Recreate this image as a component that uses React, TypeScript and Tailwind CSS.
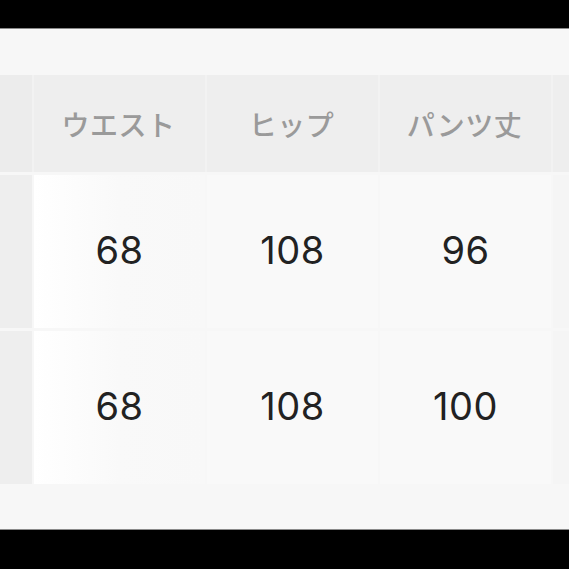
const headers = ["ウエスト", "ヒップ", "パンツ丈"];
const rows = [
  ["68", "108", "96"],
  ["68", "108", "100"],
];

const font = { fontFamily: '"Noto Sans CJK JP", "Noto Sans", sans-serif' };
const numFont = { fontFamily: 'Inter, "Noto Sans CJK JP", sans-serif' };

export default function App() {
  return (
    <div className="w-[569px] h-[569px] flex flex-col bg-[#f7f7f7] overflow-hidden" style={font}>
      {/* top bar */}
      <div className="h-[29px] shrink-0 bg-black border-b border-[#8a8a8a]" />
      <div className="h-[46px] shrink-0" />

      {/* header row */}
      <div className="h-[97px] shrink-0 grid grid-cols-[32px_171px_171px_171px_1fr] gap-x-[2px] bg-[#f2f2f2]">
        <div className="bg-[#ececec]" />
        {headers.map((h) => (
          <div key={h} className="bg-[#eeeeee] flex items-center justify-center pr-[2px] text-[28px] font-medium leading-none text-[#9a9a9a] tracking-[0.5px]">
            {h}
          </div>
        ))}
        <div className="bg-[#eeeeee]" />
      </div>

      {/* data rows */}
      <div className="flex flex-col gap-y-[3px] pt-[3px]">
        {rows.map((r, i) => (
          <div key={i} className="h-[153px] grid grid-cols-[32px_171px_171px_171px_1fr] gap-x-[2px]">
            <div className="bg-[#eeeeee]" />
            {r.map((v, j) => (
              <div
                key={j}
                style={numFont}
                className={
                  "flex items-center justify-center pb-[4px] text-[38px] leading-none text-[#222222] tracking-[0.5px] " +
                  (j === 0 ? "bg-gradient-to-r from-white via-[#f9f9f9] to-[#f8f8f8]" : "bg-[#f9f9f9]")
                }
              >
                {v}
              </div>
            ))}
            <div className="bg-[#f5f5f5]" />
          </div>
        ))}
      </div>

      <div className="flex-1" />
      {/* bottom bar */}
      <div className="h-[40px] shrink-0 bg-black border-t border-[#8a8a8a]" />
    </div>
  );
}
